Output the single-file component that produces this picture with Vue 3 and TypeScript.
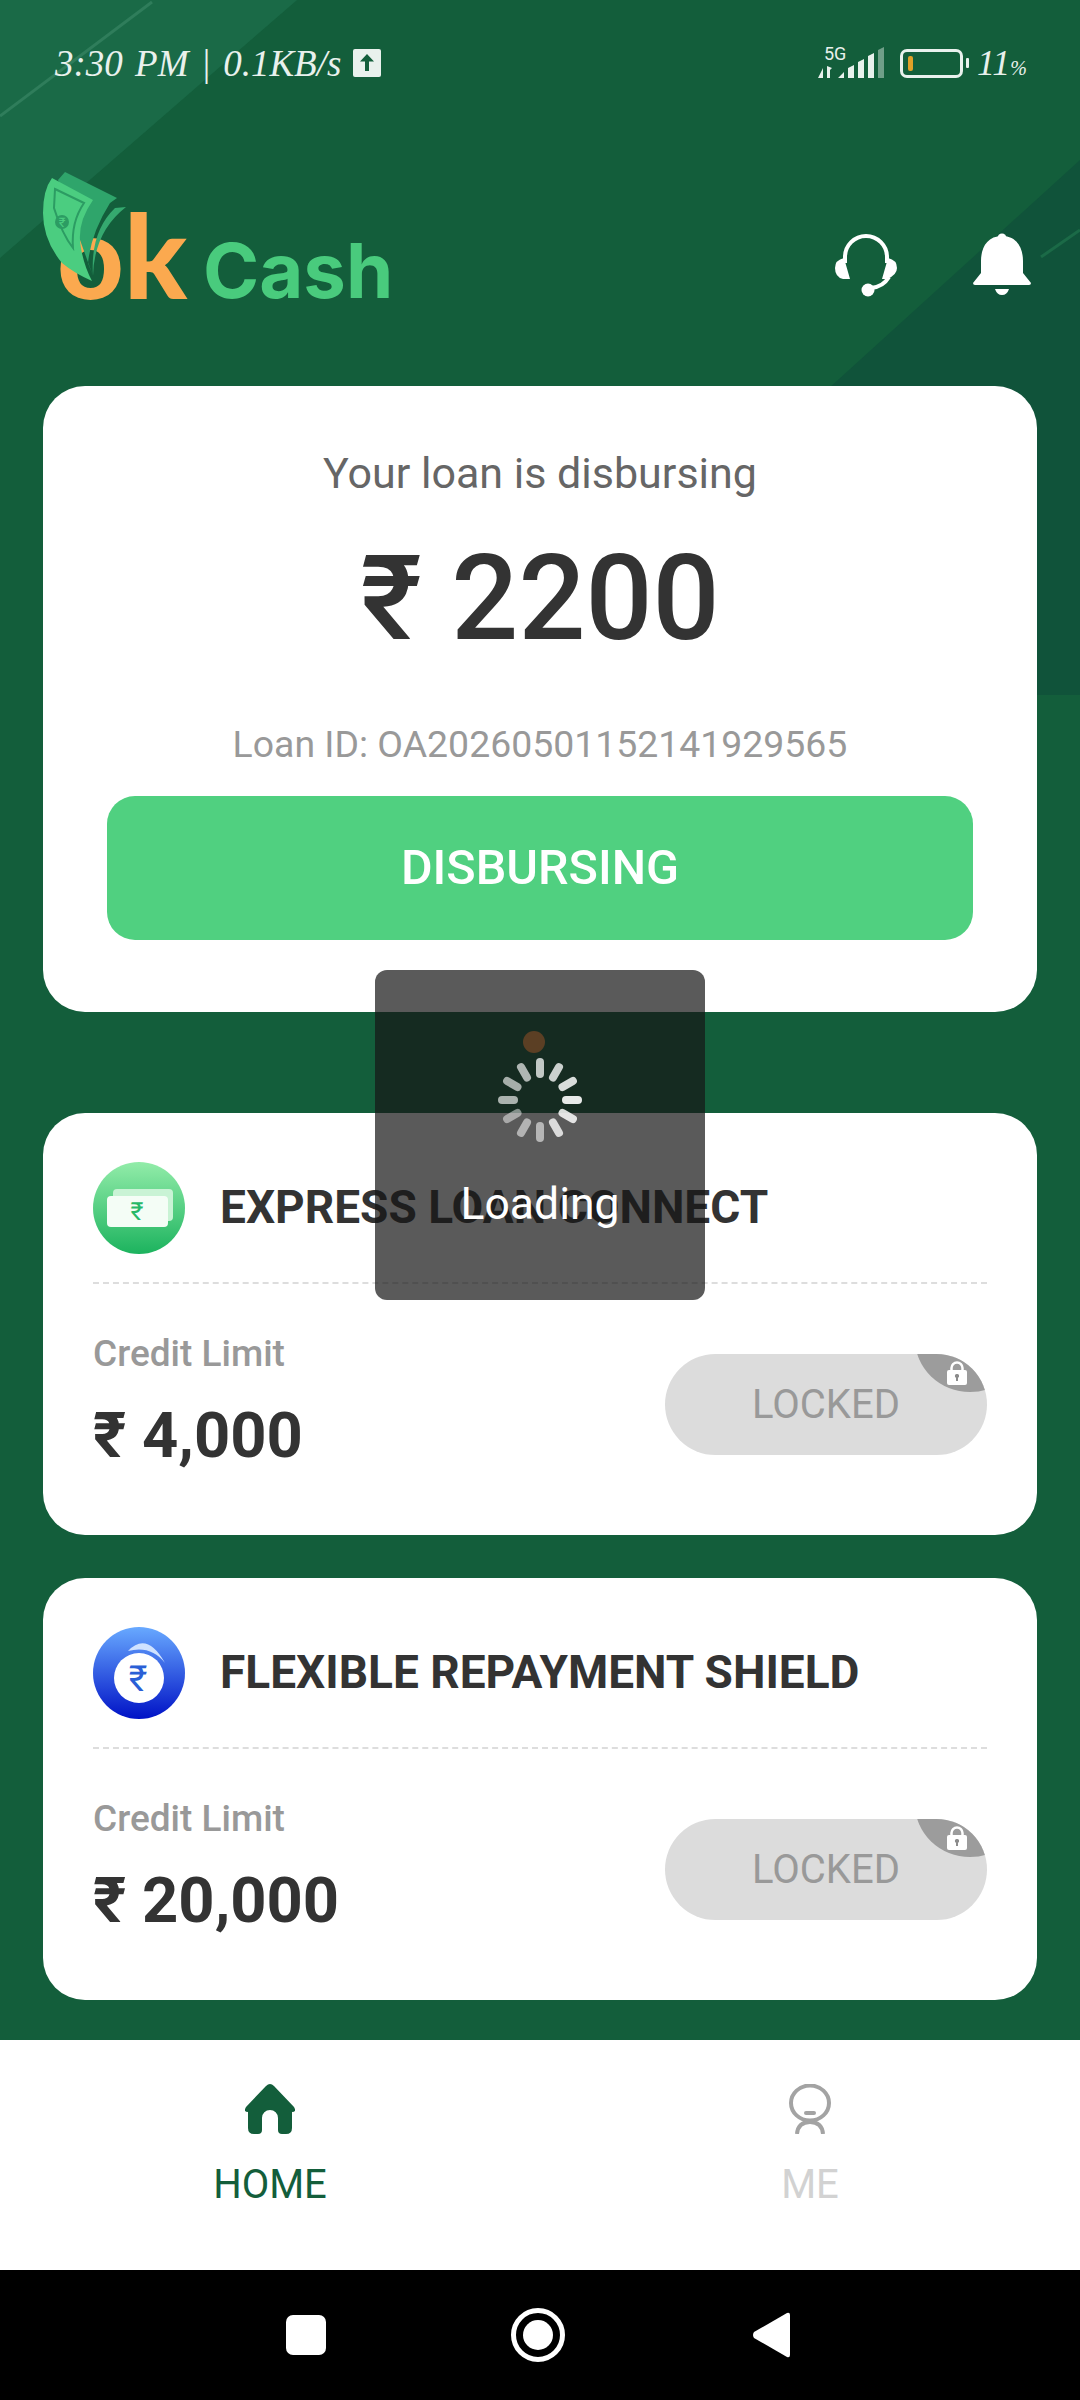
<template>
  <div class="screen">
    <svg class="bg-deco" width="1080" height="720" viewBox="0 0 1080 720">
      <polygon points="0,0 297,0 0,258" fill="#1a6a47" />
      <polygon points="1080,160 640,560 640,695 1080,695" fill="#10533a" />
      <line x1="0" y1="116" x2="152" y2="2" stroke="#2f7d5b" stroke-width="3" />
      <line x1="1041" y1="257" x2="1080" y2="230" stroke="#1b6a47" stroke-width="3" />
    </svg>

    <div class="status-bar">
      <div class="status-left">
        <span class="status-text">3:30 PM | 0.1KB/s</span>
        <svg class="upload" width="28" height="28" viewBox="0 0 28 28">
          <rect width="28" height="28" rx="2" fill="#e9f1ed" />
          <path d="M14 5 L21 12.5 H16 V22 H12 V12.5 H7 Z" fill="#135e3b" />
        </svg>
      </div>
      <div class="status-right">
        <svg width="68" height="38" viewBox="0 -2 68 38">
          <text x="6" y="14" class="net-label">5G</text>
          <path d="M5 22 V32 H0 Z M9 20 L14 22 L12 24 V32 H9 Z" fill="#e9f1ed" />
          <path d="M20 32 L26 26 V32 Z M30 32 V22 L36 19 V32 Z M40 32 V16 L46 13 V32 Z M50 32 V10 L56 7 V32 Z" fill="#e9f1ed" />
          <path d="M60 32 V4 L66 1 V32 Z" fill="#6f9f88" />
        </svg>
        <div class="battery"><span class="battery-fill"></span></div>
        <span class="battery-nub"></span>
        <span class="battery-text">11<small>%</small></span>
      </div>
    </div>

    <header class="top-row">
      <div class="logo">
        <span class="logo-ok">ok</span>
        <span class="logo-cash">Cash</span>
        <svg class="logo-note" width="90" height="116" viewBox="0 0 90 116">
          <path d="M25 2 L77 28 L70 33 Q51 63 48 93 L53 106 L40 70 L18 10 Z" fill="#2fa56b" />
          <path d="M86 37 L75 38 Q50 62 53 106 Q54 62 86 37 Z" fill="#35a96f" />
          <path d="M12 8 L53 30 Q36 54 41 78 Q44 96 52 111 Q34 103 22 93 Q3 70 3 43 Q3 20 12 8 Z" fill="#4bcd80" />
          <path d="M15 19 L44 33 Q31 52 33 78 Q22 64 14 38 Z" fill="none" stroke="#2c9c63" stroke-width="2" />
          <circle cx="22" cy="52" r="7" fill="#2c9c63" />
          <text x="22" y="57" class="note-sign">₹</text>
        </svg>
      </div>
      <div class="top-icons">
        <svg width="62" height="64" viewBox="0 0 62 64">
          <path d="M10 30 V24 A21 21 0 0 1 52 24 V30" fill="none" stroke="#fff" stroke-width="4" />
          <path d="M9 25 L15 46 H8 Q0 44 0 35 Q0 27 9 25 Z M53 25 L47 46 H52 Q62 42 62 35 Q62 27 53 25 Z" fill="#fff" />
          <path d="M54 44 Q48 54 36 55" fill="none" stroke="#fff" stroke-width="4" />
          <circle cx="33" cy="57" r="6.5" fill="#fff" />
        </svg>
        <svg width="58" height="62" viewBox="0 0 58 62">
          <circle cx="29" cy="5" r="4.5" fill="#fff" />
          <path d="M29 3 C14 3 8 15 8 28 V40 L0 50 Q0 52 2 52 H56 Q58 52 58 50 L50 40 V28 C50 15 44 3 29 3 Z" fill="#fff" />
          <path d="M22 56 H36 Q34 62 29 62 Q24 62 22 56 Z" fill="#fff" />
        </svg>
      </div>
    </header>

    <main class="content">
      <section class="card loan-card">
        <div class="loan-title">Your loan is disbursing</div>
        <div class="loan-amount">₹ 2200</div>
        <div class="loan-id">Loan ID: OA20260501152141929565</div>
        <div class="loan-btn">DISBURSING</div>
      </section>

      <section v-for="p in products" :key="p.title" class="card product-card">
        <div class="product-head">
          <svg v-if="p.kind === 'green'" width="92" height="92" viewBox="0 0 92 92">
            <defs>
              <linearGradient id="gGreen" x1="0" y1="0" x2="0" y2="1">
                <stop offset="0" stop-color="#92eca9" />
                <stop offset="1" stop-color="#1cb35e" />
              </linearGradient>
            </defs>
            <circle cx="46" cy="46" r="46" fill="url(#gGreen)" />
            <rect x="20" y="27" width="60" height="32" rx="4" fill="#c9f3d5" />
            <rect x="14" y="34" width="61" height="31" rx="4" fill="#f4fdf6" />
            <text x="44" y="58" class="coin-green">₹</text>
          </svg>
          <svg v-else width="92" height="92" viewBox="0 0 92 92">
            <defs>
              <linearGradient id="gBlue" x1="0" y1="0" x2="0" y2="1">
                <stop offset="0" stop-color="#68a9ff" />
                <stop offset="1" stop-color="#0012c6" />
              </linearGradient>
            </defs>
            <circle cx="46" cy="46" r="46" fill="url(#gBlue)" />
            <path d="M35 24 Q54 4 72 36 Q58 18 35 24 Z" fill="#cfe2ff" />
            <circle cx="46" cy="51" r="25" fill="#fff" />
            <text x="45" y="64" class="coin-blue">₹</text>
          </svg>
          <span class="product-title">{{ p.title }}</span>
        </div>
        <div class="product-body">
          <div>
            <div class="limit-label">Credit Limit</div>
            <div class="limit-value">{{ p.limit }}</div>
          </div>
          <div class="locked">
            LOCKED
            <span class="lock-badge"></span>
            <svg class="lock-icon" width="20" height="24" viewBox="0 0 20 24">
              <path d="M4.5 11 V7 A5.5 5.5 0 0 1 15.5 7 V11" fill="none" stroke="#fff" stroke-width="2.5" />
              <rect y="9" width="20" height="15" rx="2" fill="#fff" />
              <path d="M10 13 A2 2 0 0 1 11 16.8 V20 H9 V16.8 A2 2 0 0 1 10 13 Z" fill="#8c8c8c" />
            </svg>
          </div>
        </div>
      </section>
    </main>

    <nav class="tabs">
      <div class="tab active">
        <svg width="50" height="50" viewBox="0 0 50 50">
          <path d="M25 0 Q27 0 29 2 L49 23 Q52 28 47 28 V44 Q47 50 41 50 H37 Q33 50 33 46 V34 A8 8 0 0 0 17 34 V46 Q17 50 13 50 H9 Q3 50 3 44 V28 Q-2 28 1 23 L21 2 Q23 0 25 0 Z" fill="#135e3b" />
        </svg>
        <span>HOME</span>
      </div>
      <div class="tab">
        <svg width="42" height="50" viewBox="0 0 42 50">
          <ellipse cx="21" cy="19" rx="19" ry="17.5" fill="none" stroke="#a3a3a3" stroke-width="4" />
          <rect x="15" y="27" width="12" height="4" rx="2" fill="#a3a3a3" />
          <path d="M21 38 Q9 38 8 50 M21 38 Q33 38 34 50" fill="none" stroke="#a3a3a3" stroke-width="4" />
        </svg>
        <span>ME</span>
      </div>
    </nav>

    <div class="sys-nav">
      <span class="sys-square"></span>
      <span class="sys-circle"><i></i></span>
      <svg width="38" height="46" viewBox="0 0 38 46">
        <path d="M1 20 L34 1 Q37 0 37 3 V43 Q37 46 34 45 L1 26 Q-1 23 1 20 Z" fill="#fff" />
      </svg>
    </div>

    <div class="toast">
      <span class="toast-dot"></span>
      <svg class="spinner" width="88" height="88" viewBox="-44 -44 88 88">
        <line
          v-for="s in spokes"
          :key="s.angle"
          x1="26"
          y1="0"
          x2="38"
          y2="0"
          stroke="#fff"
          stroke-width="8"
          stroke-linecap="round"
          :stroke-opacity="s.alpha"
          :transform="`rotate(${s.angle})`"
        />
      </svg>
      <div class="toast-text">Loading</div>
    </div>
  </div>
</template>

<script setup lang="ts">
const products = [
  { title: 'EXPRESS LOAN CONNECT', limit: '₹ 4,000', kind: 'green' },
  { title: 'FLEXIBLE REPAYMENT SHIELD', limit: '₹ 20,000', kind: 'blue' },
]

const alphas = [0.9, 0.84, 0.78, 0.56, 0.54, 0.48, 0.64, 0.62, 0.66, 0.74, 0.78, 0.84]
const spokes = alphas.map((alpha, i) => ({ angle: i * 30, alpha }))
</script>

<style scoped>
.screen {
  position: relative;
  width: 1080px;
  height: 2400px;
  display: flex;
  flex-direction: column;
  overflow: hidden;
  background: #135e3b;
  font-family: Roboto, "Liberation Sans", sans-serif;
}

.bg-deco {
  position: absolute;
  left: 0;
  top: 0;
}

.status-bar {
  position: relative;
  height: 128px;
  padding: 44px 53px 0 55px;
  box-sizing: border-box;
  display: flex;
  justify-content: space-between;
  align-items: flex-start;
  color: #e9f1ed;
}

.status-left {
  display: flex;
  align-items: center;
  gap: 12px;
  height: 38px;
}

.status-text {
  font-family: "Liberation Serif", serif;
  font-style: italic;
  font-size: 37px;
  word-spacing: 3px;
}

.status-right {
  display: flex;
  align-items: center;
  height: 38px;
}

.net-label {
  font-family: Roboto, sans-serif;
  font-size: 18px;
  fill: #e9f1ed;
}

.battery {
  width: 63px;
  height: 29px;
  margin-left: 14px;
  padding: 4px 5px;
  box-sizing: border-box;
  border: 3px solid #e9f1ed;
  border-radius: 7px;
}

.battery-fill {
  display: block;
  width: 5px;
  height: 100%;
  border-radius: 2px;
  background: #e0a128;
}

.battery-nub {
  width: 3px;
  height: 10px;
  margin-left: 3px;
  border-radius: 1px;
  background: #e9f1ed;
}

.battery-text {
  margin-left: 8px;
  font-family: "Liberation Serif", serif;
  font-style: italic;
  font-size: 36px;
}

.battery-text small {
  font-size: 20px;
}

.top-row {
  position: relative;
  height: 258px;
  padding: 42px 49px 0 40px;
  box-sizing: border-box;
  display: flex;
  justify-content: space-between;
  align-items: flex-start;
}

.logo {
  position: relative;
  width: 360px;
  height: 130px;
  font-family: Lato, sans-serif;
}

.logo-ok {
  position: absolute;
  left: 17px;
  top: 15px;
  font-size: 116px;
  line-height: 140px;
  font-weight: 900;
  color: #fba94f;
}

.logo-cash {
  position: absolute;
  left: 163px;
  top: 45px;
  font-family: Inter, sans-serif;
  font-size: 76px;
  line-height: 110px;
  font-weight: 700;
  color: #49cb7d;
}

.logo-note {
  position: absolute;
  left: 0;
  top: 0;
}

.note-sign {
  font-family: Roboto, sans-serif;
  font-size: 13px;
  text-anchor: middle;
  fill: #4bcd80;
}

.top-icons {
  display: flex;
  align-items: flex-start;
  gap: 76px;
  padding-top: 63px;
}

.content {
  position: relative;
  padding: 0 43px;
  display: flex;
  flex-direction: column;
  gap: 43px;
}

.card {
  background: #fff;
  border-radius: 42px;
}

.loan-card {
  height: 626px;
  margin-bottom: 58px;
  padding: 62px 64px 0;
  box-sizing: border-box;
  text-align: center;
}

.loan-title {
  font-size: 43px;
  line-height: 50px;
  color: #666;
}

.loan-amount {
  margin-top: 26px;
  font-size: 118px;
  line-height: 150px;
  font-weight: 500;
  color: #333;
}

.loan-id {
  margin-top: 48px;
  font-size: 37.4px;
  line-height: 44px;
  color: #999;
}

.loan-btn {
  height: 144px;
  margin-top: 30px;
  border-radius: 28px;
  background: #50d080;
  color: #fff;
  font-size: 48.5px;
  font-weight: 500;
  line-height: 144px;
}

.product-card {
  height: 422px;
  padding: 49px 50px 0;
  box-sizing: border-box;
}

.product-head {
  display: flex;
  align-items: center;
  gap: 35px;
  padding-bottom: 28px;
  border-bottom: 2px dashed #ddd;
}

.product-title {
  padding-bottom: 3px;
  font-size: 46px;
  font-weight: 700;
  color: #333;
}

.coin-green {
  font-family: Roboto, sans-serif;
  font-size: 25px;
  text-anchor: middle;
  fill: #28b868;
}

.coin-blue {
  font-family: Roboto, sans-serif;
  font-size: 36px;
  text-anchor: middle;
  fill: #2a5fd6;
}

.product-body {
  display: flex;
  justify-content: space-between;
  align-items: flex-start;
}

.limit-label {
  margin-top: 48px;
  font-size: 37px;
  line-height: 44px;
  font-weight: 500;
  color: #999;
}

.limit-value {
  margin-top: 24px;
  font-size: 63.3px;
  line-height: 70px;
  font-weight: 700;
  color: #333;
}

.locked {
  position: relative;
  width: 322px;
  height: 101px;
  margin-top: 70px;
  border-radius: 51px;
  overflow: hidden;
  background: #dcdcdc;
  color: #999;
  font-size: 40px;
  line-height: 101px;
  text-align: center;
}

.lock-badge {
  position: absolute;
  left: 250px;
  top: -68px;
  width: 110px;
  height: 106px;
  border-radius: 50%;
  background: #9c9c9c;
}

.lock-icon {
  position: absolute;
  left: 282px;
  top: 7px;
}

.tabs {
  position: relative;
  height: 230px;
  margin-top: auto;
  padding-top: 44px;
  box-sizing: border-box;
  display: flex;
  background: #fff;
}

.tab {
  flex: none;
  width: 540px;
  display: flex;
  flex-direction: column;
  align-items: center;
  color: #d2d2d2;
  font-size: 40px;
  line-height: 46px;
  gap: 28px;
}

.tab.active {
  color: #135e3b;
}

.sys-nav {
  position: relative;
  height: 130px;
  background: #000;
  display: flex;
  align-items: center;
  padding-left: 286px;
}

.sys-square {
  width: 40px;
  height: 40px;
  border-radius: 7px;
  background: #fff;
}

.sys-circle {
  width: 54px;
  height: 54px;
  margin-left: 185px;
  box-sizing: border-box;
  border: 5px solid #fff;
  border-radius: 50%;
  display: flex;
  align-items: center;
  justify-content: center;
}

.sys-circle i {
  width: 30px;
  height: 30px;
  border-radius: 50%;
  background: #fff;
}

.sys-nav svg {
  margin-left: 188px;
}

.toast {
  position: absolute;
  left: 375px;
  top: 970px;
  width: 330px;
  height: 330px;
  border-radius: 12px;
  background: rgba(23, 23, 23, 0.71);
  display: flex;
  flex-direction: column;
  align-items: center;
  padding-top: 86px;
  box-sizing: border-box;
}

.toast-dot {
  position: absolute;
  left: 148px;
  top: 61px;
  width: 22px;
  height: 22px;
  border-radius: 50%;
  background: #5b3f24;
}

.toast-text {
  margin-top: 35px;
  color: #fff;
  font-size: 44.5px;
  line-height: 50px;
}
</style>
